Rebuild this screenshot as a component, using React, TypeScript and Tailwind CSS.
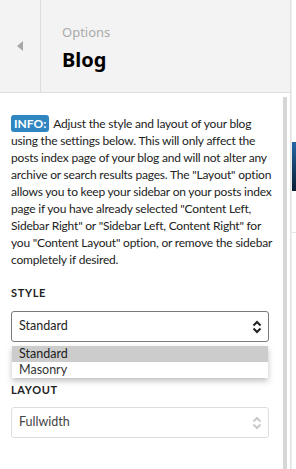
import React from "react";

function UpDown({ className }: { className?: string }) {
  return (
    <svg width="10" height="14" viewBox="0 0 10 14" className={className}>
      <path d="M1.5 5.5 L5 2 L8.5 5.5" fill="none" stroke="currentColor" strokeWidth="2" />
      <path d="M1.5 8.5 L5 12 L8.5 8.5" fill="none" stroke="currentColor" strokeWidth="2" />
    </svg>
  );
}

export default function App() {
  return (
    <div className="flex h-[469px] w-[296px] overflow-hidden bg-white font-['Lato',sans-serif] text-[#222]">
      <div className="flex w-[291px] flex-col border-r border-[#e2e2e2]">
        {/* header */}
        <div className="flex h-[93px] shrink-0 border-b border-[#dedede] bg-[#f3f3f3]">
          <div className="flex w-[41px] items-center justify-center border-r border-[#dcdcdc]">
            <span className="mt-[-1px] h-0 w-0 border-y-[5px] border-r-[6px] border-y-transparent border-r-[#a8a8a8]" />
          </div>
          <div className="flex flex-col pl-[21px] pt-[23px] font-['Noto_Sans',sans-serif]">
            <span className="text-[13px] leading-[18px] text-[#aaa]">Options</span>
            <span className="mt-[7px] text-[20px] font-bold leading-[24px] text-black">Blog</span>
          </div>
        </div>

        {/* body */}
        <div className="flex flex-1">
          <div className="flex-1 pl-[11px] pr-[6px] pt-[22px]">
            <p className="text-[12px] leading-[17px] tracking-[-0.2px]">
              <span className="mr-[4px] rounded-[3px] bg-[#2f86c1] px-[3px] py-[1px] font-bold tracking-normal text-white">INFO:</span>
              Adjust the style and layout of your blog using the settings below. This will only affect the posts index page of your blog and will not alter any archive or search results pages. The "Layout" option allows you to keep your sidebar on your posts index page if you have already selected "Content Left, Sidebar Right" or "Sidebar Left, Content Right" for you "Content Layout" option, or remove the sidebar completely if desired.
            </p>

            <div className="mt-[18px] text-[11px] font-bold uppercase leading-[14px] tracking-[0.06em]">Style</div>
            <div className="relative mt-[11px] w-[258px]">
              <div className="flex h-[31px] items-center justify-between rounded-[3px] border border-[#7a7a7a] pl-[7px] pr-[6px] text-[12.5px]">
                <span>Standard</span>
                <UpDown className="text-[#222]" />
              </div>
              <div className="absolute left-[1px] top-[35px] z-10 w-[256px] bg-white text-[12.5px] leading-[16px] shadow-[0_3px_6px_rgba(0,0,0,0.25)]">
                <div className="bg-[#cccccc] pl-[7px]">Standard</div>
                <div className="pl-[7px] text-[#333]">Masonry</div>
              </div>
            </div>

            <div className="mt-[41px] text-[11px] font-bold uppercase leading-[14px] tracking-[0.06em]">Layout</div>
            <div className="mt-[10px] flex h-[31px] w-[258px] items-center justify-between rounded-[3px] border border-[#dedede] pl-[7px] pr-[6px] text-[12.5px] text-[#444]">
              <span>Fullwidth</span>
              <UpDown className="text-[#c8c8c8]" />
            </div>
          </div>
          <div className="mr-[3px] mt-[4px] w-[4px] bg-[#d6d6d6]" />
        </div>
      </div>

      {/* page behind */}
      <div className="flex flex-1 flex-col border-l border-[#eeeeee] bg-white">
        <div className="mt-[142px] h-[49px] bg-[linear-gradient(180deg,#2466a6,#0b1d33)]" />
        <div className="mt-[41px] border-t border-[#e4e4e4]" />
      </div>
    </div>
  );
}
